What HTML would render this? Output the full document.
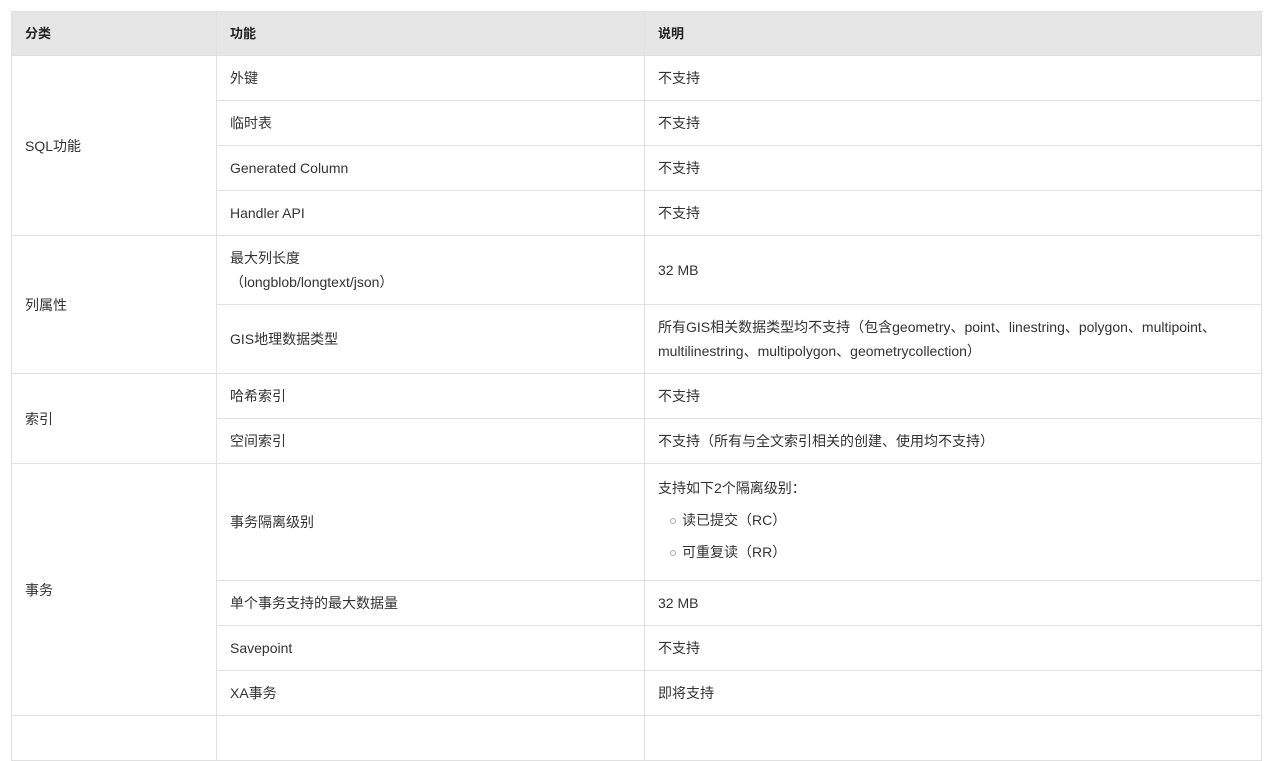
<!DOCTYPE html><html><head><meta charset="utf-8"><style>
body{margin:0;background:#fff;font-family:"Liberation Sans","Noto Sans CJK SC",sans-serif;font-size:14px;color:#333;}
table{position:absolute;left:11px;top:11px;border-collapse:collapse;table-layout:fixed;width:1250px;}
td,th{border:1px solid #e0e0e0;padding:0 13px;text-align:left;vertical-align:middle;line-height:24px;}
th{background:#e6e6e6;font-weight:bold;height:43px;color:#222;font-size:13px}
td{height:44px;}
ul{margin:4px 0 0;padding-left:12px;list-style:none}
li{line-height:32px;position:relative;padding-left:12px}
li:before{content:"";position:absolute;left:0;top:14px;width:4px;height:4px;border:1px solid #aaa;border-radius:50%}
</style></head><body><table>
<colgroup><col style="width:205px"><col style="width:428px"><col style="width:617px"></colgroup>
<tr><th>分类</th><th>功能</th><th>说明</th></tr>
<tr><td rowspan="4">SQL功能</td><td>外键</td><td>不支持</td></tr>
<tr><td>临时表</td><td>不支持</td></tr>
<tr><td>Generated Column</td><td>不支持</td></tr>
<tr><td>Handler API</td><td>不支持</td></tr>
<tr><td rowspan="2">列属性</td><td style="height:68px">最大列长度<br>（longblob/longtext/json）</td><td>32 MB</td></tr>
<tr><td style="height:68px">GIS地理数据类型</td><td>所有GIS相关数据类型均不支持（包含geometry、point、linestring、polygon、multipoint、multilinestring、multipolygon、geometrycollection）</td></tr>
<tr><td rowspan="2">索引</td><td>哈希索引</td><td>不支持</td></tr>
<tr><td>空间索引</td><td>不支持（所有与全文索引相关的创建、使用均不支持）</td></tr>
<tr><td rowspan="4">事务</td><td style="height:116px">事务隔离级别</td><td>支持如下2个隔离级别：<ul><li>读已提交（RC）</li><li>可重复读（RR）</li></ul></td></tr>
<tr><td>单个事务支持的最大数据量</td><td>32 MB</td></tr>
<tr><td>Savepoint</td><td>不支持</td></tr>
<tr><td>XA事务</td><td>即将支持</td></tr>
<tr><td>&nbsp;</td><td>&nbsp;</td><td>&nbsp;</td></tr>
</table></body></html>
